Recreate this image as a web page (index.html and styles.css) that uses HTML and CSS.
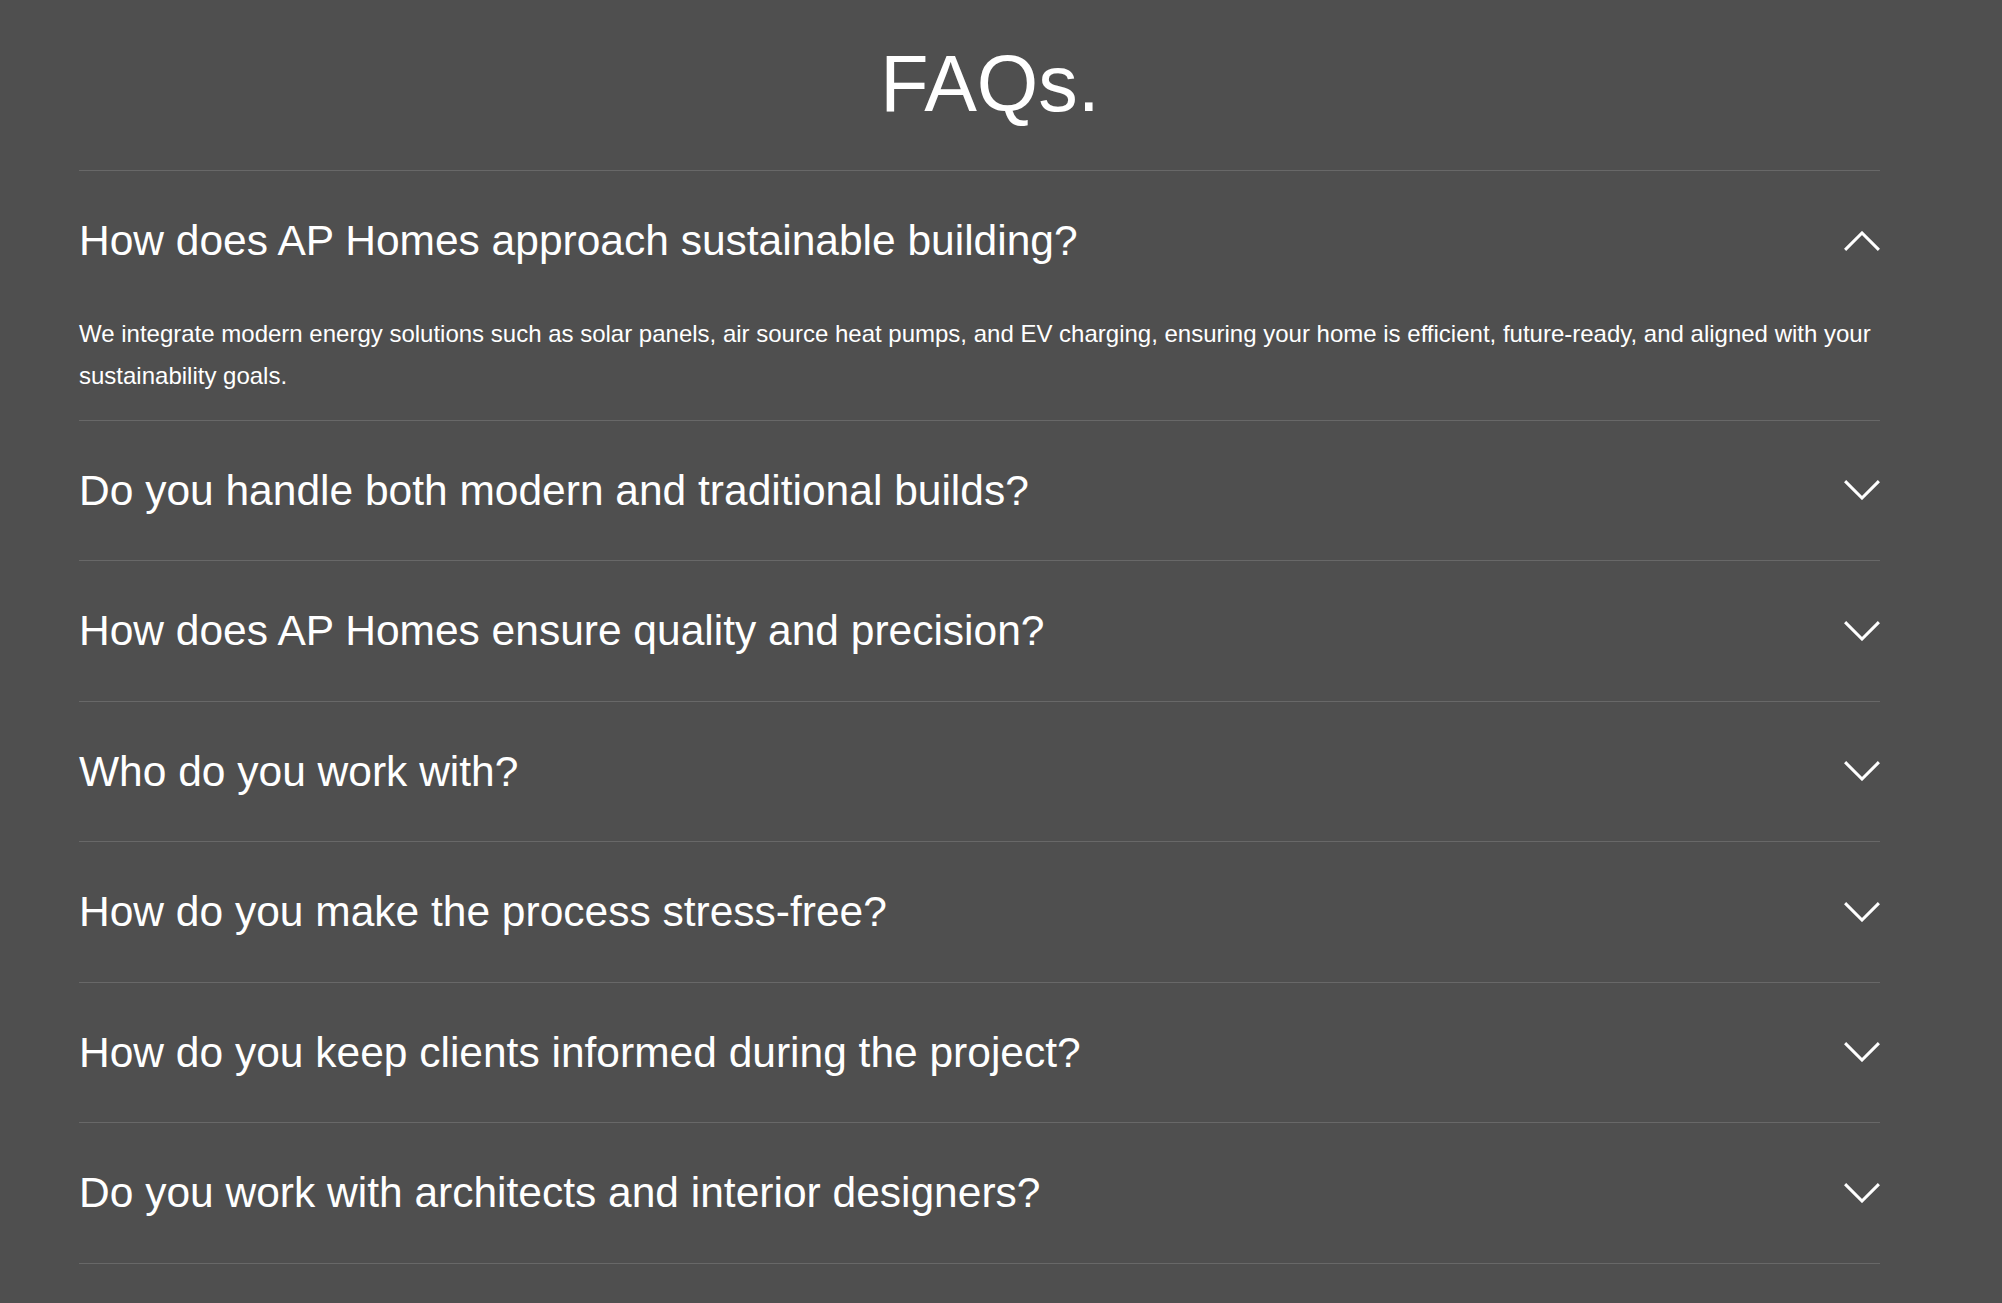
FILE: index.html
```html
<!DOCTYPE html>
<html lang="en">
<head>
<meta charset="utf-8">
<title>FAQs</title>
<link rel="stylesheet" href="styles.css">
</head>
<body>
<main class="faq">
  <h1 class="faq-title">FAQs.</h1>
  <div class="faq-list">
    <div class="faq-item is-open">
      <div class="faq-q">
        <span>How does AP Homes approach sustainable building?</span>
        <svg class="chev" width="36" height="20" viewBox="0 0 36 20"><polyline points="1.1,18.9 18,2 34.9,18.9"/></svg>
      </div>
      <p class="faq-a">We integrate modern energy solutions such as solar panels, air source heat pumps, and EV charging, ensuring your home is efficient, future-ready, and aligned with your sustainability goals.</p>
    </div>
    <div class="faq-item">
      <div class="faq-q">
        <span>Do you handle both modern and traditional builds?</span>
        <svg class="chev" width="36" height="20" viewBox="0 0 36 20"><polyline points="1.1,1.1 18,18 34.9,1.1"/></svg>
      </div>
    </div>
    <div class="faq-item">
      <div class="faq-q">
        <span>How does AP Homes ensure quality and precision?</span>
        <svg class="chev" width="36" height="20" viewBox="0 0 36 20"><polyline points="1.1,1.1 18,18 34.9,1.1"/></svg>
      </div>
    </div>
    <div class="faq-item">
      <div class="faq-q">
        <span>Who do you work with?</span>
        <svg class="chev" width="36" height="20" viewBox="0 0 36 20"><polyline points="1.1,1.1 18,18 34.9,1.1"/></svg>
      </div>
    </div>
    <div class="faq-item">
      <div class="faq-q">
        <span>How do you make the process stress-free?</span>
        <svg class="chev" width="36" height="20" viewBox="0 0 36 20"><polyline points="1.1,1.1 18,18 34.9,1.1"/></svg>
      </div>
    </div>
    <div class="faq-item">
      <div class="faq-q">
        <span>How do you keep clients informed during the project?</span>
        <svg class="chev" width="36" height="20" viewBox="0 0 36 20"><polyline points="1.1,1.1 18,18 34.9,1.1"/></svg>
      </div>
    </div>
    <div class="faq-item">
      <div class="faq-q">
        <span>Do you work with architects and interior designers?</span>
        <svg class="chev" width="36" height="20" viewBox="0 0 36 20"><polyline points="1.1,1.1 18,18 34.9,1.1"/></svg>
      </div>
    </div>
  </div>
</main>
</body>
</html>
```
FILE: styles.css
```css
html, body {
  margin: 0;
  padding: 0;
  background: #4f4f4f;
  color: #ffffff;
  font-family: "Liberation Sans", Arial, sans-serif;
}

.faq {
  width: 1801px;
  margin-left: 79px;
  padding-top: 38px;
}

.faq-title {
  margin: 0 0 40px;
  padding-left: 21px;
  text-align: center;
  font-size: 79px;
  line-height: 92px;
  font-weight: 400;
}

.faq-item {
  border-top: 1px solid #686868;
}

.faq-item:last-child {
  border-bottom: 1px solid #686868;
}

.faq-q {
  display: flex;
  justify-content: space-between;
  align-items: center;
  padding: 40px 0;
  font-size: 42.5px;
  line-height: 59.5px;
}

.chev {
  display: block;
  flex: none;
}

.chev polyline {
  fill: none;
  stroke: #ffffff;
  stroke-width: 3;
  stroke-linecap: butt;
  stroke-linejoin: miter;
}

.faq-a {
  margin: 0;
  padding: 2px 0 23px;
  font-size: 24px;
  line-height: 42px;
}
```
